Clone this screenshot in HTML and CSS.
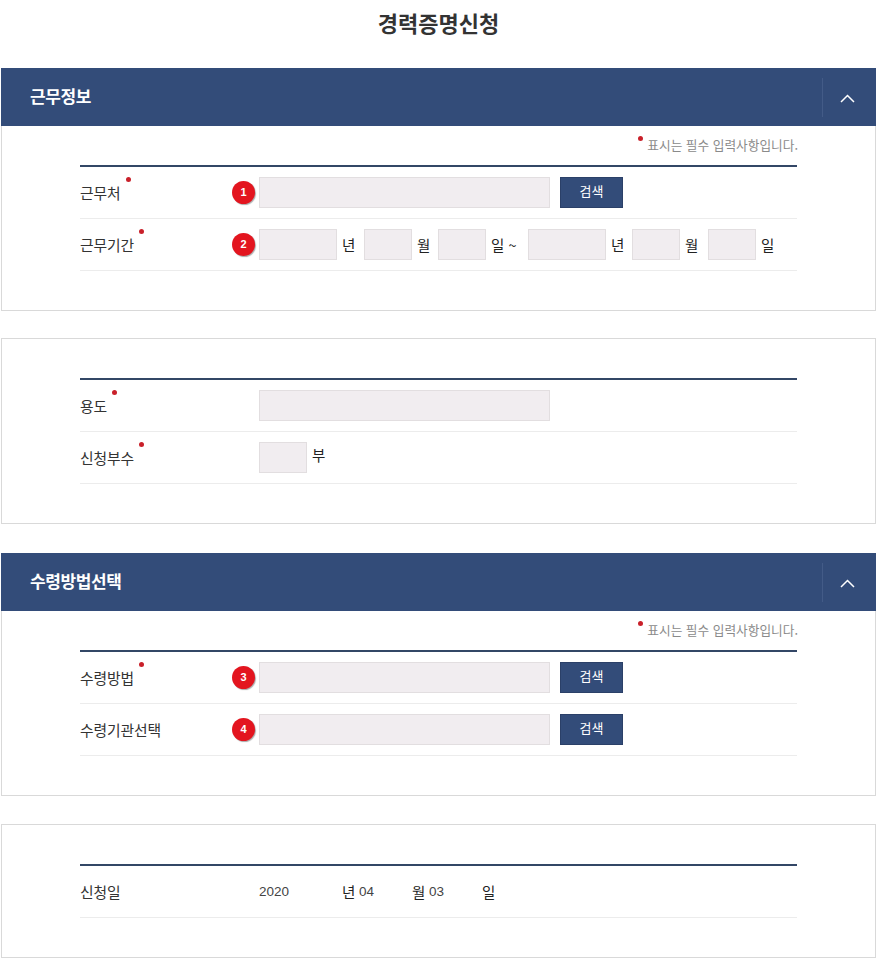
FILE: index.html
```html
<!DOCTYPE html>
<html lang="ko">

<head>
  <title>경력증명신청</title>
  <link rel="stylesheet" href="styles.css">
</head>

<body>
  <h1 class="page-title">경력증명신청</h1>

  <section class="panel">
    <header class="panel-head">
      <h2>근무정보</h2>
      <button class="toggle" type="button">
        <svg width="15" height="9" viewBox="0 0 15 9"><polyline points="1,8 7.5,1.5 14,8" /></svg>
      </button>
    </header>
    <div class="panel-body">
      <p class="note"><i class="dot"></i>표시는 필수 입력사항입니다.</p>
      <div class="form-table">
        <div class="row">
          <div class="label"><span class="req">근무처</span></div>
          <div class="value">
            <span class="badge">1</span>
            <input class="field field-lg" type="text">
            <button class="btn" type="button">검색</button>
          </div>
        </div>
        <div class="row">
          <div class="label"><span class="req">근무기간</span></div>
          <div class="value">
            <span class="badge">2</span>
            <input class="field field-year" type="text"><span class="unit">년</span>
            <input class="field field-sm" type="text"><span class="unit unit-tight">월</span>
            <input class="field field-sm" type="text"><span class="unit unit-wide">일 ~</span>
            <input class="field field-year" type="text"><span class="unit unit-tight">년</span>
            <input class="field field-sm" type="text"><span class="unit unit-loose">월</span>
            <input class="field field-sm" type="text"><span class="unit">일</span>
          </div>
        </div>
      </div>
    </div>
  </section>

  <section class="panel">
    <div class="panel-body no-note">
      <div class="form-table">
        <div class="row">
          <div class="label"><span class="req">용도</span></div>
          <div class="value">
            <input class="field field-lg" type="text">
          </div>
        </div>
        <div class="row">
          <div class="label"><span class="req">신청부수</span></div>
          <div class="value">
            <input class="field field-sm" type="text"><span class="unit unit-raised">부</span>
          </div>
        </div>
      </div>
    </div>
  </section>

  <section class="panel">
    <header class="panel-head">
      <h2>수령방법선택</h2>
      <button class="toggle" type="button">
        <svg width="15" height="9" viewBox="0 0 15 9"><polyline points="1,8 7.5,1.5 14,8" /></svg>
      </button>
    </header>
    <div class="panel-body">
      <p class="note"><i class="dot"></i>표시는 필수 입력사항입니다.</p>
      <div class="form-table">
        <div class="row">
          <div class="label"><span class="req">수령방법</span></div>
          <div class="value">
            <span class="badge">3</span>
            <input class="field field-lg" type="text">
            <button class="btn" type="button">검색</button>
          </div>
        </div>
        <div class="row">
          <div class="label">수령기관선택</div>
          <div class="value">
            <span class="badge">4</span>
            <input class="field field-lg" type="text">
            <button class="btn" type="button">검색</button>
          </div>
        </div>
      </div>
    </div>
  </section>

  <section class="panel">
    <div class="panel-body no-note">
      <div class="form-table">
        <div class="row">
          <div class="label">신청일</div>
          <div class="value">
            <span class="num num-year">2020</span><span class="date-unit">년</span>
            <span class="num">04</span><span class="date-unit">월</span>
            <span class="num">03</span><span class="date-unit">일</span>
          </div>
        </div>
      </div>
    </div>
  </section>
</body>

</html>
```

FILE: styles.css
```css
html {
  background-color: #fff;
  color: #333;
  font: 14.5px/1.2 "Noto Sans CJK KR", "Noto Sans", sans-serif;
}

body {
  margin: 0;
  padding: 0 4px 4px 1px;
}

p,
h1,
h2 {
  margin: 0;
}

.page-title {
  height: 44px;
  margin-bottom: 24px;
  text-align: center;
  font-size: 22px;
  line-height: 44px;
  font-weight: 700;
  color: #333;
}

.panel {
  border: 1px solid #d9d9d9;
  margin-bottom: 28px;
}

.panel:nth-of-type(1) {
  margin-bottom: 27px;
}

.panel:nth-of-type(2) {
  margin-bottom: 29px;
}

.panel-head {
  display: flex;
  align-items: center;
  justify-content: space-between;
  height: 58px;
  margin: -1px -1px 0;
  padding-left: 29px;
  background-color: #334c79;
  color: #fff;
}

.panel-head h2 {
  padding-bottom: 2px;
  font-size: 17px;
  font-weight: 700;
  letter-spacing: -0.4px;
}

.toggle {
  display: flex;
  align-items: center;
  justify-content: center;
  width: 54px;
  height: 39px;
  padding: 3px 4px 0 0;
  background: none;
  border: none;
  border-left: 1px solid #435b87;
}

.toggle polyline {
  fill: none;
  stroke: #fff;
  stroke-width: 1.5;
}

.panel-body {
  padding: 0 78px 39px;
}

.no-note {
  padding-top: 39px;
}

.note {
  position: relative;
  height: 39px;
  padding-top: 10px;
  box-sizing: border-box;
  text-align: right;
  font-size: 12.7px;
  line-height: 17px;
  color: #8a8a8a;
  margin-right: -1px;
}

.dot,
.req::after {
  position: absolute;
  width: 5px;
  height: 5px;
  border-radius: 50%;
  background-color: #c9202a;
}

.note .dot {
  right: 155px;
  top: 10px;
}

.form-table {
  border-top: 2px solid #334766;
}

.row {
  display: flex;
  align-items: center;
  height: 52px;
  box-sizing: border-box;
  border-bottom: 1px solid #ececec;
}

.label {
  width: 179px;
  flex: none;
  font-size: 14.8px;
  color: #333;
  letter-spacing: -0.1px;
}

.req {
  position: relative;
}

.req::after {
  content: "";
  top: -5px;
  left: calc(100% + 5px);
}

.value {
  position: relative;
  display: flex;
  align-items: center;
  color: #333;
}

.badge {
  position: absolute;
  left: -27px;
  top: 50%;
  width: 23px;
  height: 23px;
  margin-top: -12px;
  border-radius: 50%;
  background-color: #e3151f;
  box-shadow: 1px 1px 1px #aaa;
  color: #fff;
  font: 700 11px/23px "Liberation Sans", sans-serif;
  text-align: center;
}

.field {
  height: 31px;
  padding: 0;
  box-sizing: border-box;
  background-color: #f1edf0;
  border: 1px solid #e2dee0;
  border-radius: 0;
  outline: none;
}

.field-lg {
  width: 291px;
}

.field-year {
  width: 78px;
}

.field-sm {
  width: 48px;
}

.unit {
  width: 13px;
  margin: 0 9px 0 5px;
  white-space: nowrap;
  color: #222;
}

.unit-tight {
  margin-right: 8px;
}

.unit-loose {
  margin-right: 10px;
}

.unit-wide {
  width: 27px;
  margin-right: 10px;
}

.unit-raised {
  padding-bottom: 5px;
}

.btn {
  width: 63px;
  height: 31px;
  margin-left: 10px;
  padding: 0 0 5px;
  background-color: #334c79;
  border: 1px solid #2b4068;
  color: #fff;
  font: 13px/1 "Noto Sans CJK KR", sans-serif;
}

.num {
  width: 53px;
  font: 13.5px/1 "Liberation Sans", sans-serif;
  color: #444;
}

.num-year {
  width: 83px;
}

.date-unit {
  width: 17px;
  color: #222;
}
```
